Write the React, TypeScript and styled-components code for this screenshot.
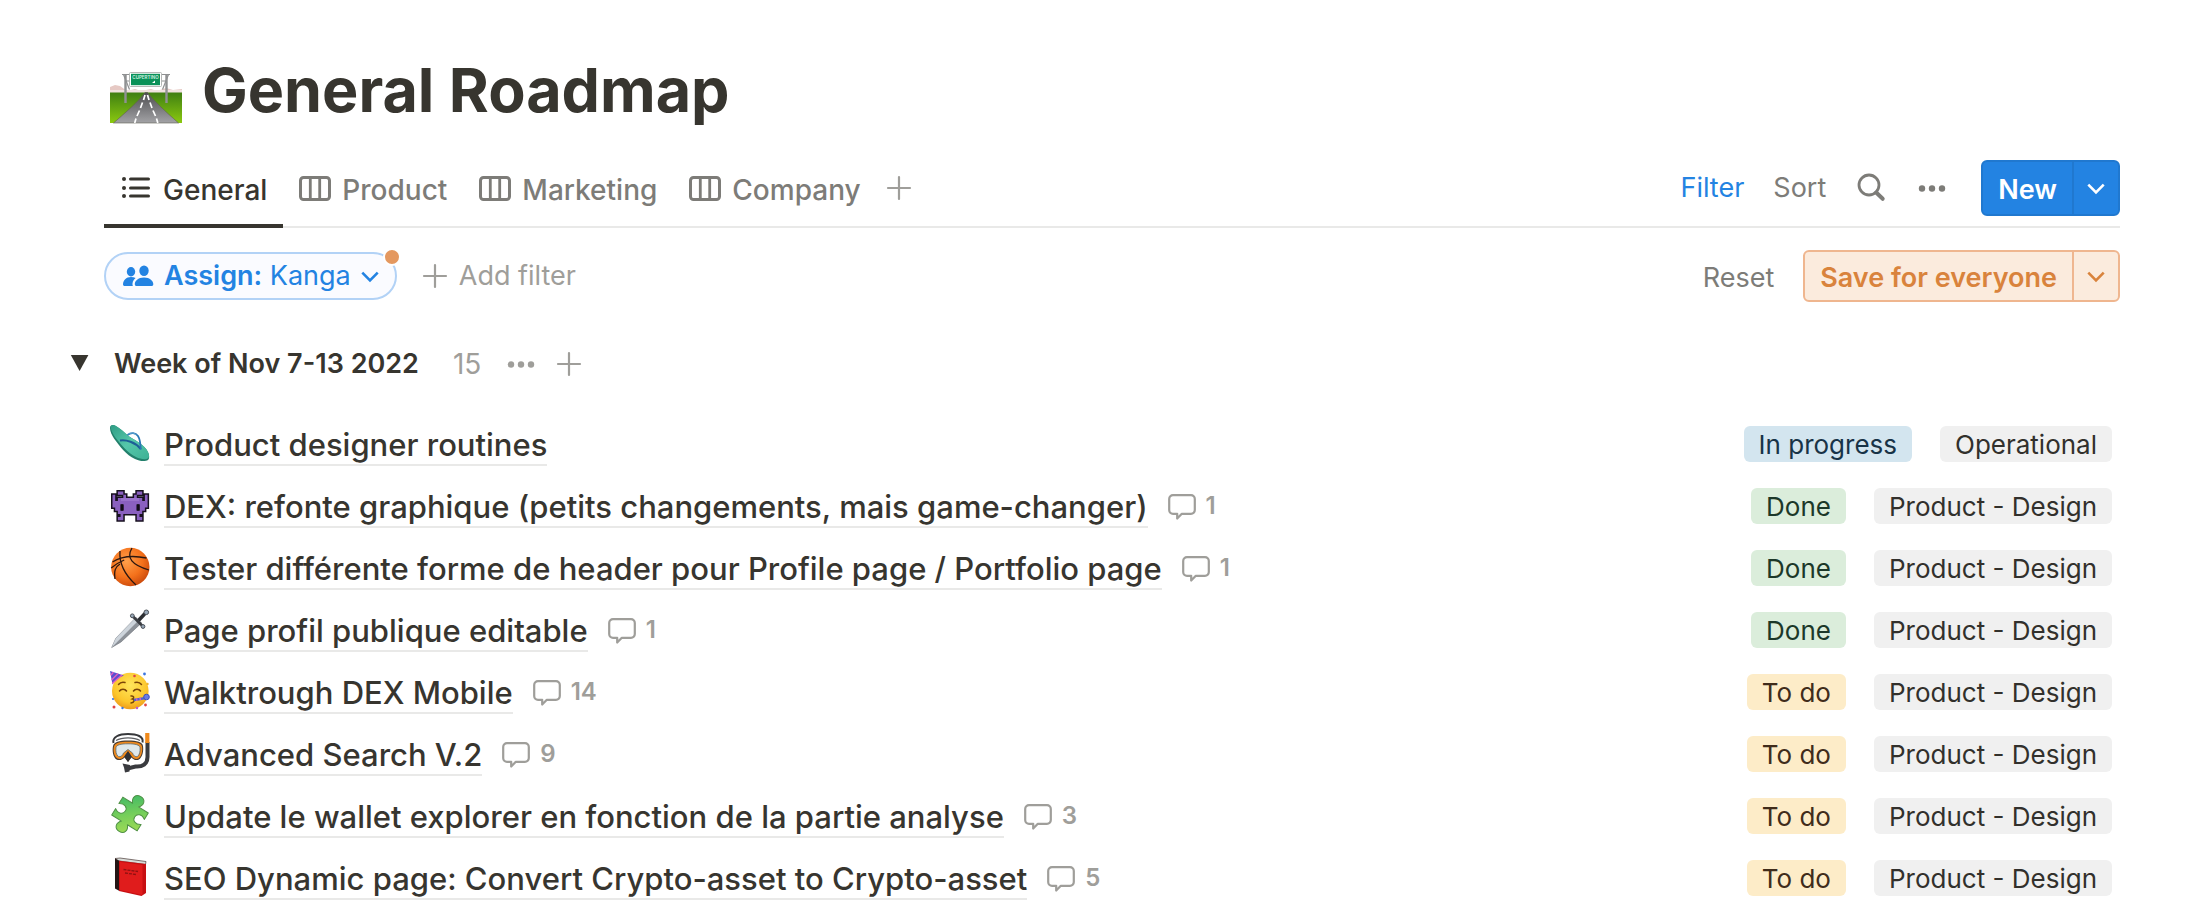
import React, { useState } from 'react';
import styled, { createGlobalStyle } from 'styled-components';

const colors = {
  text: '#37352f',
  muted: '#7d7c78',
  faint: '#9f9e9a',
  rule: '#e9e9e8',
  blue: '#2383e2',
  orange: '#d9833c',
};

const GlobalStyle = createGlobalStyle`
  *, *::before, *::after { box-sizing: border-box; }
  body {
    margin: 0;
    background: #fff;
    color: ${colors.text};
    font-family: Inter, "Liberation Sans", sans-serif;
  }
  button { font: inherit; color: inherit; background: none; border: 0; margin: 0; padding: 0; cursor: pointer; }
  svg { display: block; flex: none; overflow: visible; }
`;

const Page = styled.main`
  padding: 52px 88px 0 104px;
`;

const TitleRow = styled.header`
  display: flex;
  align-items: flex-end;
  gap: 20px;
  padding-left: 6px;
`;

const TitleIcon = styled.span`
  padding-bottom: 4px;
`;

const Title = styled.h1`
  margin: 0;
  font-size: 61px;
  line-height: 76px;
  font-weight: 700;
`;

const Toolbar = styled.div`
  display: flex;
  justify-content: space-between;
  height: 78px;
  margin-top: 22px;
  border-bottom: 2px solid ${colors.rule};
`;

const Tabs = styled.div`
  display: flex;
  margin-bottom: -2px;
`;

const Tab = styled.button<{ $active?: boolean }>`
  display: flex;
  align-items: center;
  gap: 11px;
  padding: 2px 16px 0;
  border-bottom: 4px solid ${(p) => (p.$active ? colors.text : 'transparent')};
  color: ${(p) => (p.$active ? colors.text : colors.muted)};
  font-size: 28px;
  line-height: 36px;
  font-weight: 500;

  span { padding-top: 4px; }
`;

const AddTab = styled(Tab)`
  padding-left: 10px;
  color: ${colors.faint};
`;

const IconButton = styled.button`
  display: flex;
  align-items: center;
  color: ${colors.faint};
`;

const Actions = styled.div`
  display: flex;
  align-items: center;
  gap: 29px;
`;

const TextButton = styled.button<{ $tone?: string }>`
  display: flex;
  align-items: center;
  gap: 12px;
  font-size: 27px;
  line-height: 36px;
  color: ${(p) => p.$tone ?? colors.muted};
`;

const ResetButton = styled(TextButton)`
  padding-top: 4px;
`;

const SplitButton = styled.div<{ $soft?: boolean }>`
  display: flex;
  height: ${(p) => (p.$soft ? '52px' : '56px')};
  margin-left: ${(p) => (p.$soft ? '0' : '4px')};
  border-radius: 6px;
  border: 2px solid ${(p) => (p.$soft ? '#efb68f' : '#2078cf')};
  background: ${(p) => (p.$soft ? '#fbebdd' : colors.blue)};
  color: ${(p) => (p.$soft ? colors.orange : '#fff')};
  font-size: 27px;
  line-height: 36px;
  font-weight: 600;

  & > button:first-child {
    padding: 4px 15px 0;
    border-right: 2px solid ${(p) => (p.$soft ? '#efb68f' : '#2078cf')};
  }
  & > button:last-child {
    display: flex;
    align-items: center;
    justify-content: center;
    width: 44px;
  }
`;

const FilterBar = styled.div`
  display: flex;
  align-items: center;
  justify-content: space-between;
  height: 52px;
  margin-top: 22px;
`;

const FilterGroup = styled.div`
  display: flex;
  align-items: center;
  gap: 26px;
`;

const Pill = styled.button`
  position: relative;
  display: flex;
  align-items: center;
  gap: 10px;
  height: 48px;
  padding: 0 16px;
  border: 2px solid #b2d2f6;
  border-radius: 24px;
  background: #fafbff;
  color: ${colors.blue};
  font-size: 27px;
  line-height: 36px;

  strong { font-weight: 600; }
`;

const UnsavedDot = styled.span`
  position: absolute;
  top: -6px;
  right: -6px;
  width: 18px;
  height: 18px;
  border: 2px solid #fff;
  border-radius: 50%;
  background: #e4985f;
`;

const GroupHeader = styled.div`
  display: flex;
  align-items: center;
  height: 40px;
  margin: 42px 0 0 -34px;
`;

const Toggle = styled.button`
  width: 44px;
  color: ${colors.text};
`;

const GroupTitle = styled.h2`
  margin: 0;
  font-size: 27px;
  line-height: 36px;
  font-weight: 600;
`;

const GroupCount = styled.span`
  margin: 0 24px 0 34px;
  font-size: 28px;
  line-height: 36px;
  color: ${colors.faint};
`;

const GroupTools = styled.div`
  display: flex;
  gap: 20px;
`;

const List = styled.ul`
  display: flex;
  flex-direction: column;
  gap: 14px;
  margin: 36px 0 0;
  padding: 0 8px 0 6px;
  list-style: none;
`;

const Row = styled.li`
  display: flex;
  align-items: center;
  height: 48px;
`;

const ItemLink = styled.a`
  margin-left: 14px;
  padding-top: 4px;
  border-bottom: 2px solid ${colors.rule};
  color: ${colors.text};
  font-size: 31px;
  line-height: 38px;
  font-weight: 500;
  text-decoration: none;
  white-space: nowrap;
`;

const Comments = styled.button`
  display: flex;
  align-items: center;
  gap: 10px;
  margin-left: 20px;
  color: ${colors.faint};
  font-size: 24px;
  line-height: 30px;
  font-weight: 600;
`;

const Tags = styled.div`
  display: flex;
  gap: 28px;
  margin-left: auto;
`;

const tones = {
  blue: ['#d3e5ef', '#183347'],
  green: ['#dbeddb', '#1c3829'],
  yellow: ['#fdecc8', '#402c1b'],
  gray: ['#f0f0f0', '#32302c'],
};

const Tag = styled.span<{ $tone: keyof typeof tones }>`
  padding: 2px 15px 0;
  border-radius: 6px;
  background: ${(p) => tones[p.$tone][0]};
  color: ${(p) => tones[p.$tone][1]};
  font-size: 26px;
  line-height: 34px;
  white-space: nowrap;
`;

const ListIcon = () => (
  <svg width="32" height="32" viewBox="0 0 32 32" fill="currentColor" aria-hidden="true">
    {[7, 16, 24].map((y) => (
      <g key={y}>
        <circle cx="4" cy={y} r="2" />
        <rect x="9" y={y - 1.5} width="21" height="3" rx="1.5" />
      </g>
    ))}
  </svg>
);

const BoardIcon = () => (
  <svg width="32" height="32" viewBox="0 0 32 32" fill="none" stroke="currentColor" strokeWidth="3" aria-hidden="true">
    <rect x="1.5" y="5.5" width="29" height="22" rx="3" />
    <path d="M11.3 5.5v22M20.7 5.5v22" strokeWidth="2.8" />
  </svg>
);

const PlusIcon = () => (
  <svg width="24" height="24" viewBox="0 0 24 24" stroke="currentColor" strokeWidth="2.2" strokeLinecap="round" aria-hidden="true">
    <path d="M12 1v22M1 12h22" />
  </svg>
);

const Chevron = () => (
  <svg width="18" height="12" viewBox="0 0 18 12" fill="none" stroke="currentColor" strokeWidth="2.6" aria-hidden="true">
    <path d="M1.3 2.6 9 10.400l7.700-7.800" />
  </svg>
);

const SearchIcon = () => (
  <svg width="32" height="32" viewBox="0 0 32 32" fill="none" stroke="currentColor" aria-hidden="true">
    <circle cx="14" cy="13" r="10" strokeWidth="2.8" />
    <path d="m21.200 20.500 6.500 6.300" strokeWidth="4" strokeLinecap="round" />
  </svg>
);

const DotsIcon = () => (
  <svg width="32" height="24" viewBox="0 0 32 24" fill="currentColor" aria-hidden="true">
    <circle cx="6" cy="12.500" r="3.200" />
    <circle cx="16" cy="12.500" r="3.200" />
    <circle cx="26" cy="12.500" r="3.200" />
  </svg>
);

const PeopleIcon = () => (
  <svg width="32" height="22" viewBox="0 0 32 22" fill="currentColor" aria-hidden="true">
    <ellipse cx="9" cy="6.700" rx="4.200" ry="4.700" />
    <ellipse cx="22" cy="5.700" rx="4.700" ry="5.200" />
    <path d="M13.600 12.900C12.300 12.300 10.700 12 9 12c-5 0-7.800 3.400-8 7.200 0 1.100.700 1.800 1.700 1.800h8.100c-1-2.800.200-6 2.800-8.100Z" />
    <path d="M22 12.500c-6 0-9.200 3.500-9.200 6.700 0 1.100.700 1.800 1.800 1.800h14.900c1.100 0 1.800-.700 1.800-1.800 0-3.200-3.300-6.700-9.300-6.700Z" />
  </svg>
);

const TriangleIcon = () => (
  <svg width="20" height="20" viewBox="0 0 20 20" fill="currentColor" aria-hidden="true">
    <path d="M.8 1h17.600L9.600 17Z" />
  </svg>
);

const CommentIcon = () => (
  <svg width="28" height="28" viewBox="0 0 28 28" fill="none" stroke="currentColor" strokeWidth="2.200" strokeLinejoin="round" aria-hidden="true">
    <path d="M5 3.200h18a3.800 3.800 0 0 1 3.800 3.800v11a3.800 3.800 0 0 1-3.800 3.800H13.800L9.200 26.500v-4.700H5A3.800 3.800 0 0 1 1.200 18V7A3.800 3.800 0 0 1 5 3.200Z" />
  </svg>
);

const RoadIcon = () => (
  <svg width="72" height="52" viewBox="0 0 72 52" aria-hidden="true">
    <defs>
      <linearGradient id="grass" x1="0" y1="0" x2="0" y2="1">
        <stop offset="0" stopColor="#3f7f12" />
        <stop offset="1" stopColor="#8bc90f" />
      </linearGradient>
      <linearGradient id="asphalt" x1="0" y1="0" x2="0" y2="1">
        <stop offset="0" stopColor="#4d4d50" />
        <stop offset="1" stopColor="#a3a3a6" />
      </linearGradient>
    </defs>
    <path d="M0 21v-6l5-2 5 1 7 5 8-2 6 2 10-2 6 2 9-3 7 2 9-1v4Z" fill="#e6c9c4" />
    <path d="M0 18h72v3H0Z" fill="#f0e2df" />
    <rect y="20.500" width="72" height="30.500" fill="url(#grass)" />
    <path d="M35 20.500h2.500C43 28 56 40 68.500 51H3.500C15 41 29 29 35 20.500Z" fill="url(#asphalt)" stroke="#5f5f50" strokeWidth=".6" />
    <g stroke="#fff" strokeWidth="1.700">
      <path d="m35 23-1.500 5M32.500 30.500l-2 5.500M29.500 38.500 27 44M26 46.500 24.700 51" />
      <path d="m37.500 23 1.500 5M40 30.500l2 5.500M43 38.500l2.500 5.500M46.500 46.500 47.800 51" />
    </g>
    <g stroke="#8f9192" fill="none">
      <path d="M15.500 2v29M56.500 2v29" strokeWidth="2.400" />
      <path d="M12 2.500h48M13.500 2.500l6 15M58.500 2.500l-6 15M15 9h42" strokeWidth="1.200" />
    </g>
    <rect x="19.500" y=".5" width="32" height="14" rx="1" fill="#fff" stroke="#b5b8b6" />
    <rect x="21" y="1.800" width="29" height="11.400" fill="#0a9158" />
    <text x="35.500" y="6.800" textAnchor="middle" fontSize="4.500" fontWeight="600" fill="#d5f3e5">CUPERTINO</text>
    <path d="m42 11 3-2.500v2.500Z" fill="#fff" />
  </svg>
);

const Emoji = styled.svg.attrs({ width: 40, height: 40, viewBox: '0 0 40 40', 'aria-hidden': true })``;

const FlipFlop = () => (
  <Emoji>
    <defs>
      <linearGradient id="sole" x1="0" y1="0" x2="1" y2="1">
        <stop offset="0" stopColor="#2f9c84" />
        <stop offset=".5" stopColor="#55c7aa" />
        <stop offset="1" stopColor="#3fb195" />
      </linearGradient>
    </defs>
    <path d="M0 4C0 1.500 2 .5 4.500 1.500c5 2 9 6.500 14 10.500 7 4.500 14 8 18 13.500 3 4.500 3.500 8.500 1.500 10.500-3 2-9 1-13-1C16 31 10 22.500 4 14.500 2 11.500 0 7.500 0 4Z" fill="#23806c" />
    <path d="M.6 2.800C1.500.6 4 .6 6.500 2.300c4.500 2.700 8 6.200 12 9.700 7 4.500 14 8 17.700 13 2.800 4.200 3.800 7.500 2 9.300-2.700 1.800-8 .7-12.200-1.300C17.500 29 11.500 21 5 13 3 10 .6 5.800.6 2.800Z" fill="url(#sole)" />
    <path d="M10 16.500c6-1 15 1.500 20.800 8.500" fill="none" stroke="#1d5f97" strokeWidth="2" />
    <path d="M17.500 11c3.500-3 8-2.500 10.500 1 2 3 2.500 8 2.800 13.500" fill="none" stroke="#2a78b5" strokeWidth="1.800" />
    <path d="M18.500 10.200c3-1.800 6-1.200 8 .8" fill="none" stroke="#6db4dd" strokeWidth=".8" />
  </Emoji>
);

const alienRows = [
  '..XX.....XX..',
  'X...X...X...X',
  'X.XXXXXXXXX.X',
  'XXXXXXXXXXXXX',
  'XXX.XXXXX.XXX',
  '.XX.XXXXX.XX.',
  '..XXXXXXXXX..',
  '...X.....X...',
  '..XX.....XX..',
];
const alienPath = alienRows
  .flatMap((row, y) =>
    [...row].map((cell, x) => (cell === 'X' ? `M${2.5 + x * 2.7} ${5.5 + y * 3.2}h2.7v3.2h-2.7Z` : '')),
  )
  .join('');

const Alien = () => (
  <Emoji>
    <path d={alienPath} fill="#17101f" stroke="#17101f" strokeWidth="3" />
    <path d={alienPath} fill="#8a60c0" />
    <path d="M11 12h18v3H11Z" fill="#9a72cc" />
    <path d="M10.600 18.500h3v6h-3ZM26.600 18.500h3v6h-3Z" fill="#120c18" />
  </Emoji>
);

const Basketball = () => (
  <Emoji>
    <defs>
      <radialGradient id="ball" cx=".4" cy=".35" r=".7">
        <stop offset="0" stopColor="#ffa04b" />
        <stop offset=".6" stopColor="#f4711b" />
        <stop offset="1" stopColor="#c9480c" />
      </radialGradient>
    </defs>
    <circle cx="20.300" cy="19" r="19.200" fill="url(#ball)" />
    <g fill="none" stroke="#2c1710" strokeWidth="1.300">
      <path d="M2.500 14C10 9 22 7 36.500 10" />
      <path d="M10 3c-1 12 5 24 16 34" />
      <path d="M22 0c-6 10 0 17 17 22" />
      <path d="M1.200 20c5-4 8-6 13-8M5 31c-1-8 0-12 5-15" />
    </g>
  </Emoji>
);

const Dagger = () => (
  <Emoji>
    <path d="M1.700 37.500 6 28 26 7.500l5.500 5.500L11 32Z" fill="#8d9299" stroke="#6a6f76" strokeWidth=".6" />
    <path d="M1.700 37.500 6 28 26 7.500l2.700 2.700Z" fill="#cdd4db" />
    <path d="M28.500 10.500 35 3.500" stroke="#2d2f33" strokeWidth="3.600" />
    <path d="m23 6.500 10 10" stroke="#3a3d42" strokeWidth="2.600" strokeLinecap="round" />
    <circle cx="22.300" cy="5.800" r="1.900" fill="#98a8b8" stroke="#4b5057" />
    <circle cx="33" cy="16.500" r="1.900" fill="#98a8b8" stroke="#4b5057" />
    <circle cx="36.300" cy="2.300" r="2.300" fill="#98a8b8" stroke="#4b5057" />
  </Emoji>
);

const Partying = () => (
  <Emoji>
    <defs>
      <radialGradient id="face" cx=".5" cy=".35" r=".65">
        <stop offset="0" stopColor="#ffe65c" />
        <stop offset=".7" stopColor="#fcc62c" />
        <stop offset="1" stopColor="#ee9c1b" />
      </radialGradient>
    </defs>
    <circle cx="20.300" cy="19" r="18.300" fill="url(#face)" />
    <path d="M0-1 14 3.500C9 5 5 8 2.500 12.500Z" fill="#5a4fd0" />
    <path d="m3.500.2-2.800 3M8 1.600 1.600 8M12 3 2.200 11.500" stroke="#e05fc1" strokeWidth="1.400" />
    <g fill="none" stroke="#7a4508" strokeWidth="1.500" strokeLinecap="round">
      <path d="M9.500 19c1.500-2.500 5.500-2.500 7 0M23.500 19c1.500-2.500 5.500-2.500 7 0" />
      <path d="M8.500 12.500c1.500-2 4-2.600 6.500-2M25 10.500c2.500-.6 5 0 6.500 2" />
      <path d="M21 24c3-.5 3.500 2 1.500 3 2.500.5 2 3.500-1.500 4" />
    </g>
    <path d="m24 28 12-2" stroke="#4e63d2" strokeWidth="2.600" />
    <path d="m26 27.700 1.500-.3M29.500 27.100l1.500-.3" stroke="#d45fc0" strokeWidth="2.600" />
    <circle cx="36.500" cy="25" r="2.800" fill="#6a7be2" stroke="#3c4fc0" />
    <circle cx="34.500" cy="2" r="1.400" fill="#3b76e0" />
    <circle cx="24.500" cy="4" r="1.300" fill="#e04545" />
    <circle cx="37.500" cy="12" r="1.200" fill="#efb32e" />
    <circle cx="4" cy="35" r="1.500" fill="#e04545" />
    <circle cx="3" cy="27" r="1.100" fill="#3b76e0" />
    <circle cx="12.500" cy="36" r="1.200" fill="#3b76e0" />
    <circle cx="35.500" cy="33" r="1.400" fill="#e04545" />
    <circle cx="27" cy="36" r="1.200" fill="#b858d8" />
  </Emoji>
);

const DivingMask = () => (
  <Emoji>
    <path d="M3.500 9C2 3 9 0 18 0s16 2.500 14.500 8.500" fill="none" stroke="#37383b" strokeWidth="2" />
    <path d="M6 6.500C12 3 24 3 30 6.500" fill="none" stroke="#5b5d61" strokeWidth="1.200" />
    <path d="M37.500 8v15c0 7-5 10-12 9.500l-8 2" fill="none" stroke="#3a3b3f" strokeWidth="4" />
    <path d="M35.200-1h4.200V9h-4.200Z" fill="#f08a1c" />
    <path d="M3 12c1-4 6-5.500 15-5.500S32.500 8 33 12c.8 5-.5 11-4 13.500-3 1.500-6 0-7.500-2L18 28l-3.500-4.500c-1.500 2-5 3.500-8 2C3 23 2 17 3 12Z" fill="#4a3c30" />
    <path d="M4 12.500c1-3.500 5.500-4.800 14-4.800s13.300 1.300 14 4.800c.8 4.500-.5 10-3.500 12-2.500 1.200-5.500 0-7-2.500L18 17.500 14.500 22c-1.500 2.500-4.500 3.700-7 2.500-3.500-2-4.500-7.500-3.500-12Z" fill="#f08a1c" />
    <path d="M6 13.500c.6-2.600 4.500-3.700 12-3.700s11.500 1.100 12 3.700c.5 3.500-.5 7.500-2.500 9-2 .8-4.200-.8-5-3.500L18 15.500 13.500 19c-.8 2.700-3 4.300-5 3.500-2.500-1.500-3-5.500-2.500-9Z" fill="#dfe8ea" stroke="#5d6a6c" strokeWidth=".8" />
    <path d="m18 17 3.500 5.500L18 28l-3.500-5.500Z" fill="#303236" />
    <path d="M12.500 29.500 20 31l-.5 6.500-4.500 1-1-5Z" fill="#3a3b3f" />
  </Emoji>
);

const Puzzle = () => (
  <Emoji>
    <defs>
      <linearGradient id="piece" x1=".2" y1="0" x2=".8" y2="1">
        <stop offset="0" stopColor="#3db768" />
        <stop offset=".5" stopColor="#74ce5a" />
        <stop offset="1" stopColor="#a5dc55" />
      </linearGradient>
    </defs>
    <g transform="translate(20 18) rotate(32)">
      <path
        d="M-15-10.500H-3.500C-7.500-15-6-20.500 0-20.500S7.500-15 3.500-10.500H15V-3C10-6.500 5.500-4 5.500 0S10 6.500 15 3V10.500H3.500C7.500 15 6 20.500 0 20.500S-7.500 15-3.500 10.500H-15V3C-10 6.500-5.500 4-5.500 0S-10-6.500-15-3Z"
        fill="url(#piece)"
        stroke="#4f9145"
        strokeWidth="1"
        strokeLinejoin="round"
      />
    </g>
  </Emoji>
);

const Book = () => (
  <Emoji>
    <path d="M5 .5 10 0l26 3.500-.5 3L9 3Z" fill="#d8dcd9" stroke="#4a3a36" strokeWidth=".7" />
    <path d="M5 .5 9.500 3v30L5 30.500Z" fill="#241515" />
    <path d="M9 2.800 36 6v29l-4.500 3L9 33Z" fill="#c70f12" />
    <path d="M10 4 32.500 7v30L10 32Z" fill="#e01c1c" />
    <path d="M13.500 11.500 28 13.500M15 15l11 1.500" stroke="#8f1212" strokeWidth="1.300" strokeDasharray="3 1" />
  </Emoji>
);

type Item = {
  icon: () => React.JSX.Element;
  title: string;
  comments?: number;
  status: 'In progress' | 'Done' | 'To do';
  area: string;
};

const items: Item[] = [
  { icon: FlipFlop, title: 'Product designer routines', status: 'In progress', area: 'Operational' },
  { icon: Alien, title: 'DEX: refonte graphique (petits changements, mais game-changer)', comments: 1, status: 'Done', area: 'Product - Design' },
  { icon: Basketball, title: 'Tester différente forme de header pour Profile page / Portfolio page', comments: 1, status: 'Done', area: 'Product - Design' },
  { icon: Dagger, title: 'Page profil publique editable', comments: 1, status: 'Done', area: 'Product - Design' },
  { icon: Partying, title: 'Walktrough DEX Mobile', comments: 14, status: 'To do', area: 'Product - Design' },
  { icon: DivingMask, title: 'Advanced Search V.2', comments: 9, status: 'To do', area: 'Product - Design' },
  { icon: Puzzle, title: 'Update le wallet explorer en fonction de la partie analyse', comments: 3, status: 'To do', area: 'Product - Design' },
  { icon: Book, title: 'SEO Dynamic page: Convert Crypto-asset to Crypto-asset', comments: 5, status: 'To do', area: 'Product - Design' },
];

const statusTone = { 'In progress': 'blue', Done: 'green', 'To do': 'yellow' } as const;
const tabs = ['General', 'Product', 'Marketing', 'Company'];

export default function App() {
  const [active, setActive] = useState('General');
  const [open, setOpen] = useState(true);

  return (
    <>
      <GlobalStyle />
      <Page>
        <TitleRow>
          <TitleIcon><RoadIcon /></TitleIcon>
          <Title>General Roadmap</Title>
        </TitleRow>

        <Toolbar>
          <Tabs role="tablist">
            {tabs.map((tab, i) => (
              <Tab key={tab} role="tab" aria-selected={tab === active} $active={tab === active} onClick={() => setActive(tab)}>
                {i === 0 ? <ListIcon /> : <BoardIcon />}
                <span>{tab}</span>
              </Tab>
            ))}
            <AddTab aria-label="Add view">
              <PlusIcon />
            </AddTab>
          </Tabs>
          <Actions>
            <TextButton $tone={colors.blue}>Filter</TextButton>
            <TextButton>Sort</TextButton>
            <TextButton aria-label="Search"><SearchIcon /></TextButton>
            <TextButton aria-label="More options"><DotsIcon /></TextButton>
            <SplitButton>
              <button>New</button>
              <button aria-label="New from template"><Chevron /></button>
            </SplitButton>
          </Actions>
        </Toolbar>

        <FilterBar>
          <FilterGroup>
            <Pill>
              <PeopleIcon />
              <span><strong>Assign:</strong> Kanga</span>
              <Chevron />
              <UnsavedDot />
            </Pill>
            <TextButton $tone={colors.faint}><PlusIcon />Add filter</TextButton>
          </FilterGroup>
          <Actions>
            <ResetButton>Reset</ResetButton>
            <SplitButton $soft>
              <button>Save for everyone</button>
              <button aria-label="More save options"><Chevron /></button>
            </SplitButton>
          </Actions>
        </FilterBar>

        <section>
          <GroupHeader>
            <Toggle aria-label="Toggle group" aria-expanded={open} onClick={() => setOpen(!open)}>
              <TriangleIcon />
            </Toggle>
            <GroupTitle>Week of Nov 7-13 2022</GroupTitle>
            <GroupCount>15</GroupCount>
            <GroupTools>
              <IconButton aria-label="Group options"><DotsIcon /></IconButton>
              <IconButton aria-label="Add item"><PlusIcon /></IconButton>
            </GroupTools>
          </GroupHeader>
          {open && (
            <List>
              {items.map(({ icon: Icon, title, comments, status, area }) => (
                <Row key={title}>
                  <Icon />
                  <ItemLink href="#">{title}</ItemLink>
                  {comments && (
                    <Comments aria-label={`${comments} comments`}>
                      <CommentIcon />
                      {comments}
                    </Comments>
                  )}
                  <Tags>
                    <Tag $tone={statusTone[status]}>{status}</Tag>
                    <Tag $tone="gray">{area}</Tag>
                  </Tags>
                </Row>
              ))}
            </List>
          )}
        </section>
      </Page>
    </>
  );
}
